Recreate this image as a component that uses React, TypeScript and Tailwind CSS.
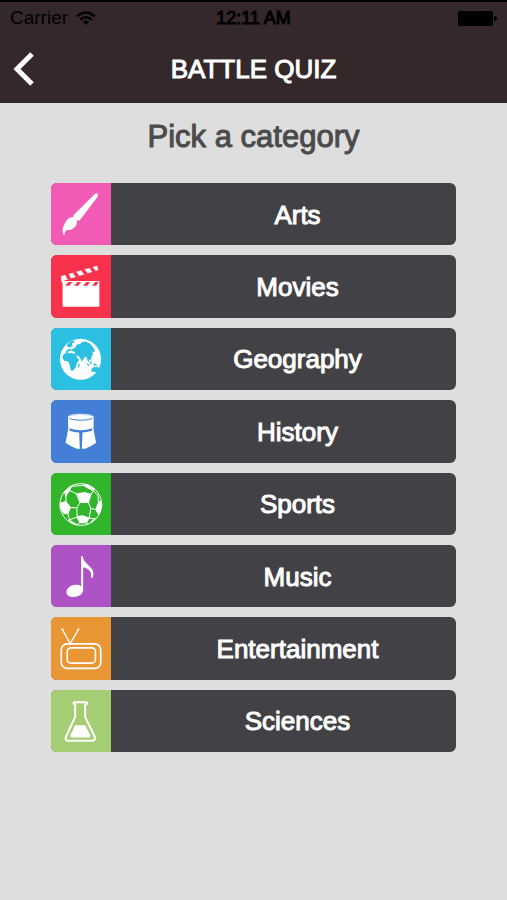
import type { ReactNode } from "react";

function BrushIcon() {
  return (
    <svg viewBox="19 15 181 188" className="size-full" fill="#fff" aria-hidden="true">
      <path d="M151 48q8-5 10 2q0 5-3 9L107 126q-4 5-9 2l-10-8q-4-4 0-9Z" />
      <path d="M80 118q7-2 13 5t4 15c-4 12-15 19-28 19c-6 1-9 6-10 17c-7-11-6-24 0-34c6-12 11-20 21-22Z" />
    </svg>
  );
}

function ClapperIcon() {
  return (
    <svg viewBox="-18 -24 181 188" className="size-full" aria-hidden="true">
      <path d="M11 40L121 8L125 21L18 54Z" fill="#fff" />
      <g fill="#f9324b">
        <path d="M24 35L34 32L43 47L32 50Z" />
        <path d="M47 29L57 26L68 39L57 43Z" />
        <path d="M72 21L82 18L93 31L82 35Z" />
        <path d="M97 14L107 11L117 24L107 28Z" />
      </g>
      <path d="M13 45L24 55L18 63L12 53Z" fill="#fff" />
      <path d="M17 54H128V129Q128 132 125 132H20Q17 132 17 129Z" fill="#fff" />
      <g fill="#f9324b">
        <path d="M35 57H46L37 69H25Z" />
        <path d="M62 57H73L64 69H52Z" />
        <path d="M89 57H100L91 69H79Z" />
        <path d="M115 57H126L118 69H106Z" />
      </g>
    </svg>
  );
}

function GlobeIcon() {
  return (
    <svg viewBox="-18 -23 181 188" className="size-full" aria-hidden="true">
      <circle cx="71" cy="71" r="62" fill="#fff" />
      <g fill="#2bbfe2">
        <path d="M35 23Q43 14 53 15L52 20L45 24L47 31L39 36L33 34L30 29Z" />
        <path d="M28 45L36 41L46 41L56 35L60 27L70 25L74 20L86 18L99 24L109 35L115 46L110 50L106 47L109 58L105 60L104 68L101 74L97 71L97 80L93 77L90 67L85 63L79 71L76 79L71 70L66 62L58 59L62 69L67 73L60 84L56 97L48 106L42 105L39 93L37 83L31 77L22 76L16 67L20 56L28 52Z" />
        <path d="M64 87L69 83L67 94L62 98Z" />
        <path d="M88 80L94 85L99 91L94 91Z" />
        <path d="M99 80L105 76L104 85L99 86Z" />
        <path d="M109 83L119 86L122 91L112 90Z" />
        <path d="M104 100L112 94L118 96L122 92L127 98Q125 106 119 112L110 108L104 110Z" />
      </g>
      <path d="M33 48L43 45L56 51L53 55L44 52L34 54Z" fill="#fff" />
    </svg>
  );
}

function HelmetIcon() {
  return (
    <svg viewBox="-18 -22 181 188" className="size-full" aria-hidden="true">
      <path d="M33 30C33 16 111 16 111 30L110 65L118 107Q101 120 85 125H60Q43 120 26 107L34 65Z" fill="#fff" />
      <path d="M36 32C45 41 99 41 108 32" fill="none" stroke="#437fd7" strokeWidth="3" />
      <path d="M39 25Q72 17 105 25" fill="none" stroke="#437fd7" strokeWidth="1" />
      <path d="M37 63Q72 76 107 63L105 71Q88 76 77 76L75 126H69L67 76Q50 76 39 71Z" fill="#437fd7" />
    </svg>
  );
}

function BallIcon() {
  return (
    <svg viewBox="-18 -22 181 188" className="size-full" aria-hidden="true">
      <g stroke="#fff" strokeWidth="3" strokeLinejoin="round" strokeLinecap="round">
        <circle cx="72" cy="73" r="63" fill="none" />
        <g fill="#fff">
          <path d="M60 41L82 37L103 42L95 67L70 67Z" />
          <path d="M13 68L27 64L41 82L33 101L20 99L10 81Z" />
          <path d="M78 107L97 114L89 128L68 128L61 111Z" />
          <path d="M132 63L134 80L126 103L117 88L125 68Z" />
          <path d="M24 35L44 18L38 31L27 47Z" />
          <path d="M81 15L94 14L113 26L110 31L94 24Z" />
          <path d="M37 120L49 127L59 133L45 129Z" />
          <path d="M104 124L115 115L105 126Z" />
        </g>
        <path
          d="M38 31L60 41M27 47L27 64M44 18L60 17L81 15M103 42L110 31M70 67L60 83L41 82M60 83L61 111M95 67L102 85L117 88M102 85L97 114M110 31L124 47L125 68M33 101L38 119M61 111L38 119M97 114L113 116M68 128L61 134M89 128L93 131"
          fill="none"
        />
      </g>
    </svg>
  );
}

function NoteIcon() {
  return (
    <svg viewBox="19 234 181 188" className="size-full" fill="#fff" aria-hidden="true">
      <path d="M110 268H115C117 284 126 288 137 300C148 311 149 321 144 333H139C143 320 138 311 129 306Q121 301 116 302V370C115 384 101 391 85 391C67 391 61 378 69 366C78 354 97 350 110 358Z" />
    </svg>
  );
}

function TelevisionIcon() {
  return (
    <svg viewBox="19 16 181 188" className="size-full" fill="none" stroke="#fff" strokeLinecap="round" aria-hidden="true">
      <rect x="50" y="97" width="119" height="74" rx="18" strokeWidth="5" />
      <rect x="68" y="109" width="85" height="46" rx="11" strokeWidth="5" />
      <path d="M54 55L77 96L101 55" strokeWidth="4" />
      <circle cx="53" cy="53" r="2" strokeWidth="3" />
      <circle cx="101" cy="53" r="2" strokeWidth="3" />
    </svg>
  );
}

function FlaskIcon() {
  return (
    <svg viewBox="19 232 181 188" className="size-full" aria-hidden="true">
      <path
        d="M90 269H125Q128 269 128 272T125 276H122V313L151 373Q154 384 143 385H70Q60 384 64 373L92 313V276H90Q87 276 87 272T90 269Z"
        fill="none"
        stroke="#fff"
        strokeWidth="6"
        strokeLinejoin="round"
      />
      <path d="M92 338H122L137 367Q140 374 134 375H80Q75 374 78 367Z" fill="#fff" />
    </svg>
  );
}

const categories: { name: string; color: string; icon: ReactNode }[] = [
  { name: "Arts", color: "bg-[#f15bb5]", icon: <BrushIcon /> },
  { name: "Movies", color: "bg-[#f9324b]", icon: <ClapperIcon /> },
  { name: "Geography", color: "bg-[#2bbfe2]", icon: <GlobeIcon /> },
  { name: "History", color: "bg-[#437fd7]", icon: <HelmetIcon /> },
  { name: "Sports", color: "bg-[#31b52a]", icon: <BallIcon /> },
  { name: "Music", color: "bg-[#ad53c6]", icon: <NoteIcon /> },
  { name: "Entertainment", color: "bg-[#e99735]", icon: <TelevisionIcon /> },
  { name: "Sciences", color: "bg-[#a5cd74]", icon: <FlaskIcon /> },
];

function StatusBar() {
  return (
    <div className="grid grid-cols-3 items-center px-[10px] text-black">
      <div className="flex items-center gap-2">
        <span className="text-[19px] leading-6">Carrier</span>
        <svg viewBox="0 0 20 15" className="h-[15px] w-5" fill="none" stroke="currentColor" strokeWidth="2.4" role="img" aria-label="Wi-Fi">
          <path d="M1 5.4Q10-2.4 19 5.4M4.3 8.7Q10 4 15.7 8.7" />
          <path d="M6.8 10.8Q10 8.3 13.2 10.8L10 14Z" fill="currentColor" stroke="none" />
        </svg>
      </div>
      <span className="text-center text-lg leading-6 [-webkit-text-stroke:1px]">12:11 AM</span>
      <svg viewBox="0 0 39 15" className="h-[15px] w-[39px] justify-self-end" fill="currentColor" role="img" aria-label="Battery full">
        <rect width="35" height="15" rx="2" />
        <path d="M36 5Q39 5 39 7.500T36 10Z" />
      </svg>
    </div>
  );
}

export default function App() {
  return (
    <div className="min-h-screen bg-[#dedede] font-['Liberation_Sans',Arial,sans-serif]">
      <header className="border-t-2 border-black bg-[#34282a] pt-1">
        <StatusBar />
        <div className="grid h-[73px] grid-cols-[40px_1fr_40px] items-center px-2 pt-1">
          <button type="button" aria-label="Back" className="flex h-11 items-center pl-1 text-white">
            <svg viewBox="0 0 24 36" className="h-9 w-6" fill="none" stroke="currentColor" strokeWidth="5" aria-hidden="true">
              <path d="M20 3L5 18L20 33" />
            </svg>
          </button>
          <h1 className="text-center text-[26px] leading-8 text-white [-webkit-text-stroke:1px]">BATTLE QUIZ</h1>
        </div>
      </header>
      <main className="px-[51px] pt-4 pb-8">
        <h2 className="text-center text-[31px] leading-9 text-[#4b4b4b] [-webkit-text-stroke:1px]">Pick a category</h2>
        <ul className="mt-[28px] grid min-h-[569px] auto-rows-fr gap-[10px]">
          {categories.map(({ name, color, icon }) => (
            <li key={name} className="flex">
              <button type="button" className="flex w-full overflow-hidden rounded-md bg-[#424145] text-white">
                <span className={`h-full w-[60px] shrink-0 ${color}`}>{icon}</span>
                <span className="flex h-full grow items-center justify-center pt-px pl-7 text-[26px] leading-8 [-webkit-text-stroke:1px]">
                  {name}
                </span>
              </button>
            </li>
          ))}
        </ul>
      </main>
    </div>
  );
}
